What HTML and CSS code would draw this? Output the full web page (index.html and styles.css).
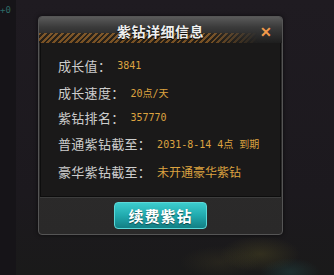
FILE: index.html
```html
<!DOCTYPE html>
<html>
<head>
<meta charset="utf-8">
<link rel="stylesheet" href="styles.css">
</head>
<body>
<div class="scene">
  <div class="side"><span class="side-text">+0</span></div>
  <div class="art"></div>
  <div class="dialog">
    <div class="header">
      <div class="stripes"></div>
      <div class="title">紫钻详细信息</div>
      <div class="close">✕</div>
    </div>
    <div class="panel">
      <div class="row r1"><span class="label">成长值：</span><span class="value">3841</span></div>
      <div class="row r2"><span class="label">成长速度：</span><span class="value">20点/天</span></div>
      <div class="row r3"><span class="label">紫钻排名：</span><span class="value">357770</span></div>
      <div class="row r4"><span class="label">普通紫钻截至：</span><span class="value">2031-8-14 4点 到期</span></div>
      <div class="row r5"><span class="label">豪华紫钻截至：</span><span class="value">未开通豪华紫钻</span></div>
    </div>
    <div class="footer">
      <div class="btn">续费紫钻</div>
    </div>
  </div>
</div>
</body>
</html>
```

FILE: styles.css
```css
html, body {
  margin: 0;
  padding: 0;
  background: #1d1a1f;
}
.scene {
  position: relative;
  width: 334px;
  height: 275px;
  overflow: hidden;
  background: linear-gradient(180deg, #1f1b21 0%, #1c191e 70%, #1a1a1a 100%);
  font-family: "Noto Sans CJK SC", "Liberation Sans", sans-serif;
}
.side {
  position: absolute;
  left: 0;
  top: 0;
  width: 16px;
  height: 275px;
  background: #161418;
}
.side-text {
  position: absolute;
  left: 0;
  top: 5px;
  font-family: "DejaVu Sans Mono", monospace;
  font-size: 9px;
  color: #2d6a66;
}
.art {
  position: absolute;
  left: 180px;
  top: 232px;
  width: 160px;
  height: 60px;
  background:
    radial-gradient(ellipse 40px 18px at 80px 22px, rgba(120,110,40,0.25), transparent),
    radial-gradient(ellipse 30px 14px at 110px 40px, rgba(40,110,110,0.25), transparent),
    radial-gradient(ellipse 40px 16px at 40px 30px, rgba(90,80,40,0.2), transparent);
}
.dialog {
  position: absolute;
  left: 38px;
  top: 16px;
  width: 245px;
  height: 219px;
  box-sizing: border-box;
  border: 1px solid #555;
  border-radius: 4px;
  background: linear-gradient(180deg, #2e2d2d 0%, #2a2929 100%);
  display: flex;
  flex-direction: column;
  overflow: hidden;
  box-shadow: 0 0 4px rgba(0,0,0,0.6);
}
.header {
  position: relative;
  height: 26px;
  flex: none;
  background: linear-gradient(180deg, #5a5a5a 0%, #3a3a3a 40%, #1e1e1e 100%);
  display: flex;
  align-items: center;
  justify-content: center;
}
.stripes {
  position: absolute;
  left: 0;
  bottom: 0;
  width: 100%;
  height: 10px;
  background: repeating-linear-gradient(135deg, rgba(190,120,40,0.7) 0 2px, rgba(40,28,12,0.6) 2px 4px);
  -webkit-mask-image: linear-gradient(90deg, #000 0%, #000 70%, transparent 90%);
  mask-image: linear-gradient(90deg, #000 0%, #000 70%, transparent 90%);
  opacity: 0.8;
}
.title {
  position: relative;
  font-size: 14px;
  font-weight: bold;
  color: #f0f0f0;
  letter-spacing: 0.5px;
  text-shadow: 0 1px 1px #000;
  margin-top: 1px;
}
.close {
  position: absolute;
  right: 10px;
  top: 6px;
  font-size: 14px;
  font-weight: bold;
  color: #f29a4a;
  line-height: 16px;
}
.panel {
  flex: none;
  height: 154px;
  margin: 0 1px;
  box-sizing: border-box;
  background: #1a1919;
  border: 1px solid #0d0d0d;
  border-top: none;
  box-shadow: 0 1px 0 #3d3d3d;
  padding: 14px 0 0 17px;
  display: flex;
  flex-direction: column;
}
.row {
  display: flex;
  align-items: center;
  height: 16px;
}
.r2 { margin-top: 11px; }
.r3 { margin-top: 9px; }
.r4 { margin-top: 10px; }
.r5 { margin-top: 12px; }
.label {
  font-size: 13px;
  color: #cdcdcd;
  letter-spacing: 0.3px;
}
.value {
  font-family: "DejaVu Sans Mono", "Noto Sans CJK SC", monospace;
  font-size: 10px;
  color: #dda340;
  margin-left: 6px;
}
.r4 .value { margin-left: 6px; }
.r5 .value { font-family: "Noto Sans CJK SC", sans-serif; font-size: 12px; margin-left: 6px; }
.footer {
  flex: 1;
  display: flex;
  align-items: center;
  justify-content: center;
}
.btn {
  width: 93px;
  height: 27px;
  box-sizing: border-box;
  border-radius: 4px;
  border: 1px solid #5cd8d8;
  background: linear-gradient(180deg, #3ccccd 0%, #21aaae 50%, #127f84 100%);
  color: #ffffff;
  font-size: 15px;
  font-weight: bold;
  display: flex;
  align-items: center;
  justify-content: center;
  text-shadow: 0 1px 1px rgba(0,0,0,0.5);
  letter-spacing: 1px;
}
```
